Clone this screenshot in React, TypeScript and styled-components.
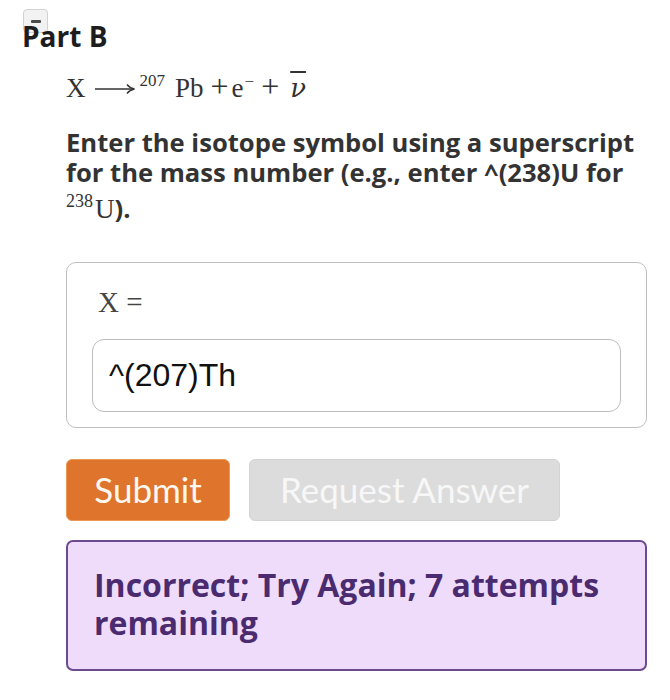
import React from 'react';
import styled, { createGlobalStyle } from 'styled-components';

const Global = createGlobalStyle`
  html, body { margin: 0; padding: 0; background: #ffffff; }
  body { font-family: "Open Sans", Lato, sans-serif; }
`;

const Page = styled.div`
  position: relative;
  width: 670px;
  height: 700px;
  box-sizing: border-box;
  padding: 20px 23px 0 22px;
  overflow: hidden;
`;

const CollapseToggle = styled.div`
  position: absolute;
  left: 23px;
  top: 9px;
  width: 25px;
  height: 24px;
  box-sizing: border-box;
  border: 1px solid #d2d2d2;
  border-radius: 4px;
  background: #f2f2f2;
  &::after {
    content: '';
    position: absolute;
    left: 7px;
    top: 10px;
    width: 10px;
    height: 3px;
    border-radius: 1px;
    background: #4a4a4a;
  }
`;

const Title = styled.h2`
  position: relative;
  margin: 0;
  font-family: "Open Sans", sans-serif;
  font-size: 28px;
  line-height: 32px;
  font-weight: 700;
  color: #1d1d1d;
`;

const Content = styled.div`
  margin-left: 44px;
  display: flex;
  flex-direction: column;
`;

const Equation = styled.div`
  margin-top: 20px;
  font-family: "Liberation Serif", "DejaVu Serif", serif;
  font-size: 27px;
  line-height: 32px;
  color: #333;
  display: flex;
  align-items: baseline;
  white-space: nowrap;
`;

const Sym = styled.span<{ $ml?: number }>`
  margin-left: ${(p) => p.$ml ?? 0}px;
`;

const Op = styled.span<{ $ml?: number }>`
  margin-left: ${(p) => p.$ml ?? 0}px;
  font-family: "Liberation Serif", "DejaVu Serif", serif;
  font-size: 32px;
  line-height: 0;
`;

const Sup = styled.span<{ $ml?: number; $raise?: number }>`
  margin-left: ${(p) => p.$ml ?? 0}px;
  font-size: 17px;
  line-height: 0;
  position: relative;
  top: -${(p) => p.$raise ?? 11}px;
`;

const Arrow = styled.svg`
  width: 40px;
  height: 14px;
  margin-left: 9px;
  align-self: center;
  position: relative;
  top: 1px;
`;

const Nu = styled.span<{ $ml?: number }>`
  margin-left: ${(p) => p.$ml ?? 0}px;
  font-family: "DejaVu Serif", "Liberation Serif", serif;
  font-style: italic;
  font-size: 26px;
  text-decoration: overline;
  text-decoration-thickness: 1.5px;
`;

const Instruction = styled.p`
  margin: 24px 0 0;
  font-family: "Open Sans", sans-serif;
  font-size: 25.6px;
  line-height: 30px;
  font-weight: 700;
  color: #333;
  white-space: nowrap;
`;

const LastLine = styled.span`
  display: block;
  margin-top: 6px;
`;

const SerifBit = styled.span`
  font-family: "Liberation Serif", "DejaVu Serif", serif;
  font-weight: 400;
  font-size: 27px;
`;

const SerifSup = styled.span`
  font-family: "Liberation Serif", "DejaVu Serif", serif;
  font-weight: 400;
  font-size: 18px;
  line-height: 0;
  position: relative;
  top: -11px;
  margin-right: 2px;
`;

const AnswerBox = styled.div`
  margin-top: 38px;
  box-sizing: border-box;
  height: 166px;
  border: 1.5px solid #bfbfbf;
  border-radius: 10px;
  padding: 21px 25px 0 25px;
  display: flex;
  flex-direction: column;
  gap: 19px;
`;

const AnswerLabel = styled.div`
  font-family: "Liberation Serif", "DejaVu Serif", serif;
  font-size: 29px;
  line-height: 36px;
  color: #444;
  padding-left: 6px;
`;

const AnswerInput = styled.div`
  box-sizing: border-box;
  height: 73px;
  border: 1.5px solid #bdbdbd;
  border-radius: 12px;
  padding-left: 16px;
  display: flex;
  align-items: center;
  font-family: "Liberation Sans", Arial, sans-serif;
  font-size: 32px;
  color: #111;
`;

const ButtonRow = styled.div`
  margin-top: 31px;
  display: flex;
  gap: 19px;
`;

const Button = styled.button<{ $variant: 'primary' | 'disabled'; $w: number }>`
  box-sizing: border-box;
  width: ${(p) => p.$w}px;
  height: 62px;
  border-radius: 6px;
  font-family: Lato, "Open Sans", sans-serif;
  font-size: 35px;
  font-weight: 400;
  padding: 0 0 2px;
  display: flex;
  align-items: center;
  justify-content: center;
  background: ${(p) => (p.$variant === 'primary' ? '#df742c' : '#dcdcdc')};
  border: 1px solid ${(p) => (p.$variant === 'primary' ? '#eb9a55' : '#d3d3d3')};
  color: ${(p) => (p.$variant === 'primary' ? '#fff8f0' : '#f7f7f7')};
`;

const Feedback = styled.div`
  margin-top: 19px;
  box-sizing: border-box;
  height: 131px;
  background: #efdcfa;
  border: 2px solid #6b4a8e;
  border-radius: 7px;
  padding: 24px 20px 0 26px;
  font-family: "Open Sans", sans-serif;
  font-size: 32px;
  line-height: 38px;
  font-weight: 700;
  color: #4b2b70;
`;

export default function App() {
  return (
    <>
      <Global />
      <Page>
        <CollapseToggle />
        <Title>Part B</Title>
        <Content>
          <Equation>
            <Sym>X</Sym>
            <Arrow viewBox="0 0 40 14">
              <line x1="0" y1="7" x2="38.5" y2="7" stroke="#333" strokeWidth="1.3" />
              <path d="M32 2.5 Q34.5 6 39.5 7 Q34.5 8 32 11.5" fill="none" stroke="#333" strokeWidth="1.3" />
            </Arrow>
            <Sup $ml={5} $raise={11}>207</Sup>
            <Sym $ml={10}>Pb</Sym>
            <Op $ml={7}>+</Op>
            <Sym $ml={3}>e</Sym>
            <Sup $ml={1} $raise={10}>−</Sup>
            <Op $ml={7}>+</Op>
            <Nu $ml={11}>ν</Nu>
          </Equation>
          <Instruction>
            Enter the isotope symbol using a superscript
            <br />
            for the mass number (e.g., enter ^(238)U for
            <LastLine>
              <SerifSup>238</SerifSup>
              <SerifBit>U</SerifBit>).
            </LastLine>
          </Instruction>
          <AnswerBox>
            <AnswerLabel>X =</AnswerLabel>
            <AnswerInput>^(207)Th</AnswerInput>
          </AnswerBox>
          <ButtonRow>
            <Button $variant="primary" $w={164}>Submit</Button>
            <Button $variant="disabled" $w={311}>Request Answer</Button>
          </ButtonRow>
          <Feedback>
            Incorrect; Try Again; 7 attempts
            <br />
            remaining
          </Feedback>
        </Content>
      </Page>
    </>
  );
}
